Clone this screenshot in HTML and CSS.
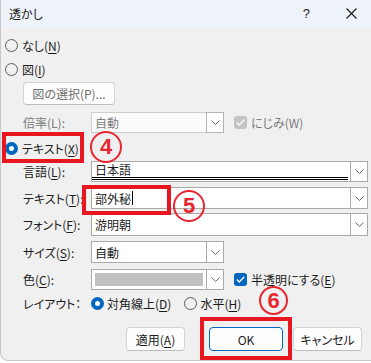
FILE: index.html
```html
<!DOCTYPE html>
<html lang="ja">
<head>
<meta charset="utf-8">
<link rel="stylesheet" href="styles.css">
</head>
<body>
<div class="dialog">
  <div class="titlebar">
    <span class="title">透かし</span>
    <span class="help">?</span>
    <span class="close"><svg width="11" height="11" viewBox="0 0 11 11"><path d="M0.5 0.5 L10.5 10.5 M10.5 0.5 L0.5 10.5" stroke="#1b1b1b" stroke-width="1.1" fill="none"/></svg></span>
  </div>
  <div class="content">
    <div class="row radio-row r-none"><span class="radio"></span><span>なし(<u>N</u>)</span></div>
    <div class="row radio-row r-pic"><span class="radio"></span><span>図(<u>I</u>)</span></div>
    <div class="row r-btn"><button class="btn btn-pick">図の選択(P)...</button></div>
    <div class="row field-row r-scale">
      <span class="label muted">倍率(L):</span>
      <div class="combo short disabled"><div class="field">自動</div><div class="dd"><svg width="9" height="5" viewBox="0 0 9 5"><path d="M0.5 0.5 L4.5 4.5 L8.5 0.5" stroke="#666" stroke-width="1" fill="none"/></svg></div></div>
      <span class="check check-off"><svg width="9" height="7" viewBox="0 0 9 7"><path d="M0.8 3.5 L3.3 6 L8.2 0.8" stroke="#fff" stroke-width="1.3" fill="none"/></svg></span>
      <span class="muted">にじみ(W)</span>
    </div>
    <div class="row radio-row r-text"><span class="radio on"></span><span>テキスト(<u>X</u>)</span></div>
    <div class="row field-row r-lang">
      <span class="label">言語(<u>L</u>):</span>
      <div class="combo long"><div class="field lang"><span class="langtext">日本語</span></div><div class="dd"><svg width="9" height="5" viewBox="0 0 9 5"><path d="M0.5 0.5 L4.5 4.5 L8.5 0.5" stroke="#666" stroke-width="1" fill="none"/></svg></div></div>
    </div>
    <div class="row field-row r-txt">
      <span class="label">テキスト(<u>T</u>):</span>
      <div class="combo long"><div class="field"><span>部外秘</span><span class="caret"></span></div><div class="dd"><svg width="9" height="5" viewBox="0 0 9 5"><path d="M0.5 0.5 L4.5 4.5 L8.5 0.5" stroke="#666" stroke-width="1" fill="none"/></svg></div></div>
    </div>
    <div class="row field-row r-font">
      <span class="label">フォント(<u>F</u>):</span>
      <div class="combo long"><div class="field">游明朝</div><div class="dd"><svg width="9" height="5" viewBox="0 0 9 5"><path d="M0.5 0.5 L4.5 4.5 L8.5 0.5" stroke="#666" stroke-width="1" fill="none"/></svg></div></div>
    </div>
    <div class="row field-row r-size">
      <span class="label">サイズ(<u>S</u>):</span>
      <div class="combo short"><div class="field">自動</div><div class="dd"><svg width="9" height="5" viewBox="0 0 9 5"><path d="M0.5 0.5 L4.5 4.5 L8.5 0.5" stroke="#666" stroke-width="1" fill="none"/></svg></div></div>
    </div>
    <div class="row field-row r-color">
      <span class="label">色(<u>C</u>):</span>
      <div class="combo short"><div class="field colorfield"><span class="swatch"></span></div><div class="dd"><svg width="9" height="5" viewBox="0 0 9 5"><path d="M0.5 0.5 L4.5 4.5 L8.5 0.5" stroke="#666" stroke-width="1" fill="none"/></svg></div></div>
      <span class="check check-on"><svg width="9" height="7" viewBox="0 0 9 7"><path d="M0.8 3.5 L3.3 6 L8.2 0.8" stroke="#fff" stroke-width="1.3" fill="none"/></svg></span>
      <span class="tight">半透明にする(<u>E</u>)</span>
    </div>
    <div class="row field-row r-layout">
      <span class="label">レイアウト：</span>
      <span class="radio on"></span><span class="opt">対角線上(<u>D</u>)</span>
      <span class="radio second"></span><span class="opt">水平(<u>H</u>)</span>
    </div>
    <div class="row r-buttons">
      <button class="btn b-apply">適用(<u>A</u>)</button>
      <button class="btn b-ok">OK</button>
      <button class="btn b-cancel">キャンセル</button>
    </div>
  </div>

  <div class="mark box1"></div>
  <div class="mark box2"></div>
  <div class="mark box3"></div>
  <div class="num n4">4</div>
  <div class="num n5">5</div>
  <div class="num n6">6</div>
</div>
</body>
</html>
```

FILE: styles.css
```css
html, body {
  margin: 0;
  background: #ffffff;
}
body {
  font-family: "Noto Sans CJK JP", "Noto Sans", sans-serif;
  font-size: 12px;
  color: #1b1b1b;
  font-feature-settings: "palt";
}
u { text-decoration-thickness: 1px; text-underline-offset: 2px; }

.dialog {
  position: relative;
  width: 371px;
  height: 361px;
  box-sizing: border-box;
  border-left: 1px solid #c9c9c9;
  border-bottom: 1px solid #c9c9c9;
  border-bottom-left-radius: 8px;
  background: #f0f0f0;
  overflow: hidden;
}

.titlebar {
  height: 27px;
  background: #eef3f9;
  display: flex;
  align-items: center;
  padding-left: 8px;
}
.title { font-size: 12px; }
.help {
  margin-left: auto;
  font-family: "Liberation Sans", sans-serif;
  font-size: 13px;
}
.close {
  display: flex;
  margin-left: 36px;
  margin-right: 14px;
}

.content {
  display: flex;
  flex-direction: column;
}
.row {
  display: flex;
  align-items: center;
}
.radio-row { padding-left: 4px; height: 16px; }
.radio-row .radio { margin-right: 4px; }

.radio {
  width: 13px;
  height: 13px;
  box-sizing: border-box;
  border: 1px solid #5a5a5a;
  border-radius: 50%;
  flex: none;
}
.radio.on {
  border: 4px solid #0067c0;
  background: #ffffff;
}

.r-none { margin-top: 10px; }
.r-pic { margin-top: 8px; }
.r-btn { margin-top: 5px; padding-left: 22px; }
.r-scale { margin-top: 7px; }
.r-text { margin-top: 7px; }
.r-lang { margin-top: 5px; }
.r-txt { margin-top: 5px; }
.r-font { margin-top: 4px; }
.r-size { margin-top: 5px; }
.r-color { margin-top: 6px; }
.r-layout { margin-top: 5px; height: 16px; }
.r-buttons { margin-top: 16px; justify-content: flex-end; padding-right: 9px; }

.field-row { padding-left: 22px; }
.label { width: 68px; flex: none; }
.muted { color: #7a7a7a; }
.tight { line-height: 13px; }

.btn {
  font-family: inherit;
  font-size: 12px;
  font-feature-settings: "palt";
  color: #1b1b1b;
  background: #fdfdfd;
  border: 1px solid #d3d3d3;
  border-bottom-color: #bdbdbd;
  border-radius: 4px;
  height: 24px;
  padding: 0;
  margin: 0;
}
.btn-pick { width: 92px; height: 23px; color: #6f6f6f; }
.b-apply { width: 59px; }
.b-ok { width: 74px; margin-left: 24px; margin-right: 10px; border: 1px solid #0067c0; box-shadow: inset 0 0 0 1px #ffffff; }
.b-cancel { width: 69px; }

.combo {
  display: flex;
  height: 21px;
}
.combo.short { width: 133px; }
.combo.long { width: 277px; }
.field {
  flex: 1;
  display: flex;
  align-items: center;
  box-sizing: border-box;
  border: 1px solid #a9a9a9;
  background: #ffffff;
  padding-left: 3px;
}
.dd {
  width: 18px;
  flex: none;
  box-sizing: border-box;
  border: 1px solid #a9a9a9;
  margin-left: -1px;
  background: #ffffff;
  display: flex;
  align-items: center;
  justify-content: center;
}
.combo.disabled .field { border-color: #cdcdcd; color: #7d7d7d; background: #fbfbfb; }
.combo.disabled .dd { border-color: #b3b3b3; }

.r-txt .combo { height: 22px; }
.r-font .combo { height: 23px; }
.r-size .combo { height: 22px; }

.field.lang {
  position: relative;
  align-items: flex-start;
}
.langtext { line-height: 15px; }
.field.lang::after {
  content: "";
  position: absolute;
  left: 0;
  right: 2px;
  bottom: 1px;
  height: 3px;
  border-bottom: 3px double #000000;
  box-sizing: border-box;
}
.caret {
  width: 1px;
  height: 14px;
  background: #000;
  margin-left: 1px;
}
.colorfield { padding: 3px; }
.swatch {
  flex: 1;
  align-self: stretch;
  background: #c0c0c0;
}

.check {
  width: 13px;
  height: 13px;
  border-radius: 3px;
  box-sizing: border-box;
  display: flex;
  align-items: center;
  justify-content: center;
  margin-left: 10px;
  margin-right: 4px;
  flex: none;
}
.check-off { background: #c3c3c3; }
.check-on { background: #0067c0; }

.r-layout .radio { margin-right: 3px; }
.r-layout .radio.second { margin-left: 13px; }

.mark {
  position: absolute;
  box-sizing: border-box;
  border: 4px solid #e8161f;
}
.box1 { left: 1px; top: 132px; width: 82px; height: 31px; }
.box2 { left: 81px; top: 185px; width: 89px; height: 30px; }
.box3 { left: 199px; top: 317px; width: 92px; height: 43px; }

.num {
  position: absolute;
  box-sizing: border-box;
  border: 2.5px solid #e8262f;
  border-radius: 50%;
  color: #e8262f;
  font-family: "Liberation Sans", sans-serif;
  font-weight: bold;
  font-size: 22px;
  line-height: 1;
  display: flex;
  align-items: center;
  justify-content: center;
}
.n4 { left: 89px; top: 131px; width: 32px; height: 32px; }
.n5 { left: 172px; top: 190px; width: 32px; height: 32px; }
.n6 { left: 258px; top: 286px; width: 29px; height: 29px; }
```
